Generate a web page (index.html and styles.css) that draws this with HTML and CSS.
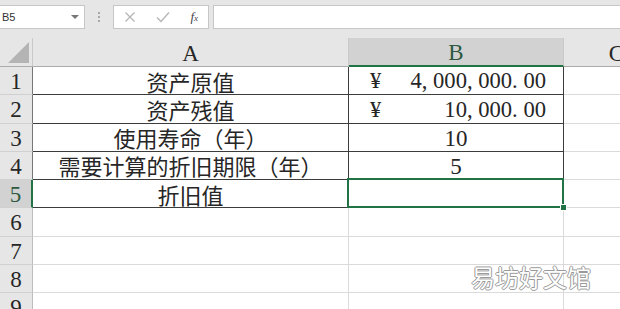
FILE: index.html
```html
<!DOCTYPE html>
<html lang="zh-CN">
<head>
    <meta charset="UTF-8">
    <title>折旧计算</title>
    <link rel="stylesheet" href="styles.css">
</head>
<body>

    <!-- Name box + formula bar -->
    <div class="toolbar">
        <div class="namebox">
            <span>B5</span>
            <span class="caret"></span>
        </div>
        <div class="grip">
            <span></span><span></span><span></span>
        </div>
        <div class="fnbox">
            <svg class="icon" width="12" height="12" viewBox="0 0 12 12">
                <path d="M1.5 1.5 L10.5 10.5 M10.5 1.5 L1.5 10.5" stroke="#b4b4b4" stroke-width="1.2" fill="none"/>
            </svg>
            <svg class="icon" width="14" height="12" viewBox="0 0 14 12">
                <path d="M1 6.5 L5 10.5 L13 1.5" stroke="#b4b4b4" stroke-width="1.3" fill="none"/>
            </svg>
            <span class="fx">f<small>x</small></span>
        </div>
        <div class="formula"></div>
    </div>

    <!-- Sheet grid -->
    <div class="sheet">
        <div class="corner"><span class="tri"></span></div>
        <div class="hd">A</div>
        <div class="hd active">B</div>
        <div class="hd">C</div>

        <div class="rh framed">1</div>
        <div class="c t">资产原值</div>
        <div class="c t tb money"><span>¥</span><span>4<i>,</i>000<i>,</i>000<i>.</i>00</span></div>
        <div class="c"></div>

        <div class="rh framed">2</div>
        <div class="c t">资产残值</div>
        <div class="c t tb money"><span>¥</span><span>10<i>,</i>000<i>.</i>00</span></div>
        <div class="c"></div>

        <div class="rh framed">3</div>
        <div class="c t">使用寿命（年）</div>
        <div class="c t tb num">10</div>
        <div class="c"></div>

        <div class="rh framed">4</div>
        <div class="c t">需要计算的折旧期限（年）</div>
        <div class="c t tb num">5</div>
        <div class="c"></div>

        <div class="rh active">5</div>
        <div class="c t">折旧值</div>
        <div class="c t tb sel"><span class="handle"></span></div>
        <div class="c"></div>

        <div class="rh">6</div>
        <div class="c"></div>
        <div class="c"></div>
        <div class="c"></div>

        <div class="rh">7</div>
        <div class="c"></div>
        <div class="c"></div>
        <div class="c"></div>

        <div class="rh">8</div>
        <div class="c"></div>
        <div class="c"></div>
        <div class="c"></div>

        <div class="rh">9</div>
        <div class="c"></div>
        <div class="c"></div>
        <div class="c"></div>
    </div>

    <div class="watermark">易坊好文馆</div>

</body>
</html>
```

FILE: styles.css
```css
body {
    margin: 0;
    width: 620px;
    height: 309px;
    overflow: hidden;
    background: #ffffff;
    font-family: "Liberation Serif", serif;
    color: #262626;
    position: relative;
}

/* ---------- toolbar ---------- */

.toolbar {
    height: 38px;
    box-sizing: border-box;
    padding-top: 5px;
    background: #e6e6e6;
    display: flex;
    align-items: flex-start;
}

.namebox {
    width: 85px;
    height: 24px;
    box-sizing: border-box;
    background: #fff;
    border: 1px solid #c6c6c6;
    border-left: none;
    display: flex;
    align-items: center;
    justify-content: space-between;
    padding: 0 5px 0 2px;
    font-family: "Liberation Sans", Arial, sans-serif;
    font-size: 11px;
    color: #333;
}

.caret {
    width: 0;
    height: 0;
    border-left: 4px solid transparent;
    border-right: 4px solid transparent;
    border-top: 4px solid #777;
}

.grip {
    width: 28px;
    height: 24px;
    display: flex;
    flex-direction: column;
    align-items: center;
    justify-content: center;
    gap: 2px;
}

.grip span {
    width: 2px;
    height: 2px;
    background: #a8a8a8;
}

.fnbox {
    width: 96px;
    height: 24px;
    box-sizing: border-box;
    background: #fff;
    border: 1px solid #c6c6c6;
    display: flex;
    align-items: center;
    justify-content: space-between;
    padding: 0 10px 0 10px;
}

.fx {
    font-family: "Liberation Serif", serif;
    font-style: italic;
    font-size: 13px;
    color: #444;
}

.fx small {
    font-size: 9px;
}

.formula {
    flex-grow: 1;
    margin-left: 4px;
    height: 24px;
    box-sizing: border-box;
    background: #fff;
    border: 1px solid #c6c6c6;
    border-right: none;
}

/* ---------- sheet ---------- */

.sheet {
    display: grid;
    grid-template-columns: 33px 316px 215px 106px;
    grid-template-rows: 29px repeat(9, 28.25px);
    line-height: 1;
}

.sheet > div {
    box-sizing: border-box;
    display: flex;
    align-items: center;
    justify-content: center;
    overflow: visible;
}

.corner {
    background: #e6e6e6;
    border-right: 1px solid #c8c8c8;
    border-bottom: 1px solid #ababab;
    position: relative;
}

.tri {
    position: absolute;
    right: 3px;
    bottom: 3px;
    width: 0;
    height: 0;
    border-left: 21px solid transparent;
    border-bottom: 21px solid #b4b4b4;
}

.hd {
    background: #e6e6e6;
    border-right: 1px solid #c8c8c8;
    border-bottom: 1px solid #ababab;
    font-size: 23px;
    padding-top: 2px;
}

.hd.active {
    background: #d2d2d2;
    color: #2d5a3f;
    border-bottom: 2px solid #217346;
}

.rh {
    background: #e6e6e6;
    border-right: 1px solid #bdbdbd;
    border-bottom: 1px solid #d0d0d0;
    font-size: 23px;
    padding-top: 2px;
}

.rh.framed {
    border-right-color: #777;
}

.rh.active {
    background: #d2d2d2;
    color: #2d5a3f;
    border-right: 2px solid #217346;
}

.c {
    border-right: 1px solid #dadada;
    border-bottom: 1px solid #dadada;
    font-family: "Noto Sans CJK SC", sans-serif;
    font-size: 22px;
    color: #262626;
}

/* table frame around A1:B5 */
.c.t {
    border-right-color: #3c3c3c;
    border-bottom-color: #3c3c3c;
}

.money {
    justify-content: space-between !important;
    padding: 2px 17px 0 21px;
    font-family: "Liberation Serif", serif;
    font-size: 22.6px;
}

/* separators take a full digit cell, as in the original font */
.money i {
    font-style: normal;
    display: inline-block;
    width: 0.5em;
}

.num {
    font-family: "Liberation Serif", serif;
    font-size: 23px;
    padding-top: 2px;
}

.sel {
    position: relative;
}

.sel::after {
    content: "";
    position: absolute;
    left: -2px;
    top: -2px;
    right: -1px;
    bottom: -1px;
    border: 2px solid #217346;
}

.handle {
    position: absolute;
    right: -4px;
    bottom: -4px;
    width: 5px;
    height: 5px;
    background: #217346;
    border: 1px solid #fff;
    z-index: 2;
}

/* ---------- watermark ---------- */

.watermark {
    position: absolute;
    left: 471px;
    top: 263px;
    font-family: "Noto Sans CJK SC", sans-serif;
    font-size: 24px;
    line-height: 28px;
    color: #ffffff;
    text-shadow: 1px 0 #9a9a9a, -1px 0 #9a9a9a, 0 1px #9a9a9a, 0 -1px #9a9a9a;
}
```
